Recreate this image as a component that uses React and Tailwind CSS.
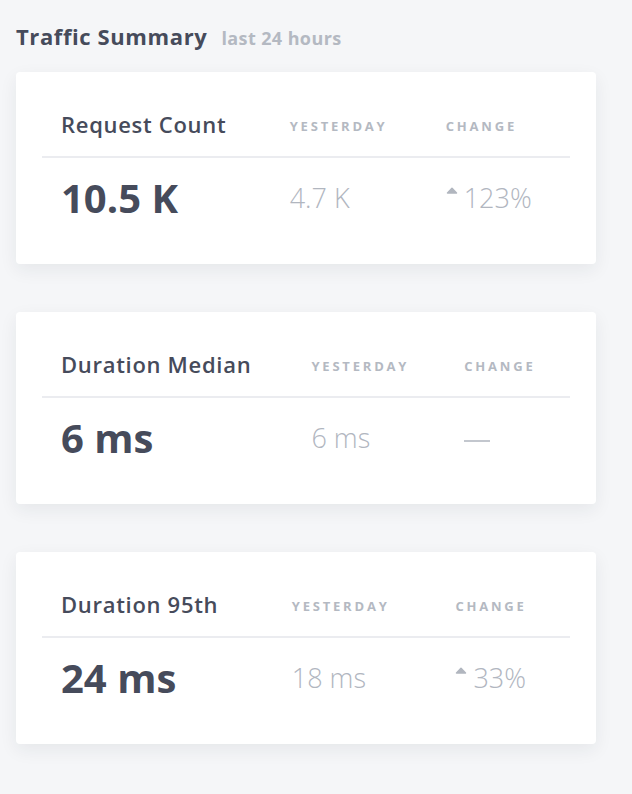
import React from "react";

const metrics = [
  { title: "Request Count", value: "10.5 K", yesterday: "4.7 K", change: "123%", dir: "up" },
  { title: "Duration Median", value: "6 ms", yesterday: "6 ms", change: null, dir: null },
  { title: "Duration 95th", value: "24 ms", yesterday: "18 ms", change: "33%", dir: "up" },
];

function Caret() {
  return (
    <svg width="12" height="7" viewBox="0 0 12 7" className="inline-block mr-[6px] align-[14px]">
      <path d="M1.5 6 L6 1.2 L10.5 6 Z" fill="#b1b6bf" stroke="#b1b6bf" strokeWidth="1.5" strokeLinejoin="round" />
    </svg>
  );
}

function MetricCard({ metric }) {
  return (
    <div className="bg-white rounded-[4px] shadow-[0_6px_18px_rgba(30,40,60,0.07)] px-[26px] pt-[38px] pb-[44px]">
      <table className="w-full table-auto border-collapse">
        <thead>
          <tr className="border-b-2 border-[#ebecf0]">
            <th className="text-left font-semibold text-[22px] tracking-[0.7px] leading-[28px] text-[#464b5b] pl-[19px] pr-[28px] pb-[18px] whitespace-nowrap">
              {metric.title}
            </th>
            <th className="text-left font-bold text-[13px] leading-[24px] tracking-[2.8px] text-[#b4b9c2] pl-[19px] pr-[28px] pt-[4px] pb-[18px]">
              YESTERDAY
            </th>
            <th className="text-left font-bold text-[13px] leading-[24px] tracking-[2.8px] text-[#b4b9c2] pl-[19px] pr-[28px] pt-[4px] pb-[18px]">
              CHANGE
            </th>
          </tr>
        </thead>
        <tbody>
          <tr>
            <td className="font-bold text-[40px] leading-[44px] text-[#464b5b] pl-[19px] pr-[28px] pt-[18px] whitespace-nowrap">
              {metric.value}
            </td>
            <td className="font-light text-[27px] leading-[44px] text-[#b1b6bf] pl-[19px] pr-[28px] pt-[18px] whitespace-nowrap">
              {metric.yesterday}
            </td>
            <td className="font-light text-[27px] leading-[44px] text-[#b1b6bf] pl-[19px] pr-[28px] pt-[18px] whitespace-nowrap">
              {metric.change ? (
                <>
                  <Caret />
                  {metric.change}
                </>
              ) : (
                <span className="inline-block w-[26px] h-[2px] bg-[#c3c7ce] align-middle" />
              )}
            </td>
          </tr>
        </tbody>
      </table>
    </div>
  );
}

export default function App() {
  return (
    <div className="min-h-screen bg-[#f5f6f8] px-[16px] pt-[20px] font-['Open_Sans',sans-serif]">
      <div className="flex items-baseline gap-[14px]">
        <h2 className="text-[22px] tracking-[0.6px] leading-[32px] font-bold text-[#464b5b]">Traffic Summary</h2>
        <span className="text-[18px] tracking-[0.4px] font-bold text-[#b4b9c2]">last 24 hours</span>
      </div>
      <div className="w-[580px] mt-[20px] flex flex-col gap-[48px]">
        {metrics.map((m) => (
          <MetricCard key={m.title} metric={m} />
        ))}
      </div>
    </div>
  );
}
